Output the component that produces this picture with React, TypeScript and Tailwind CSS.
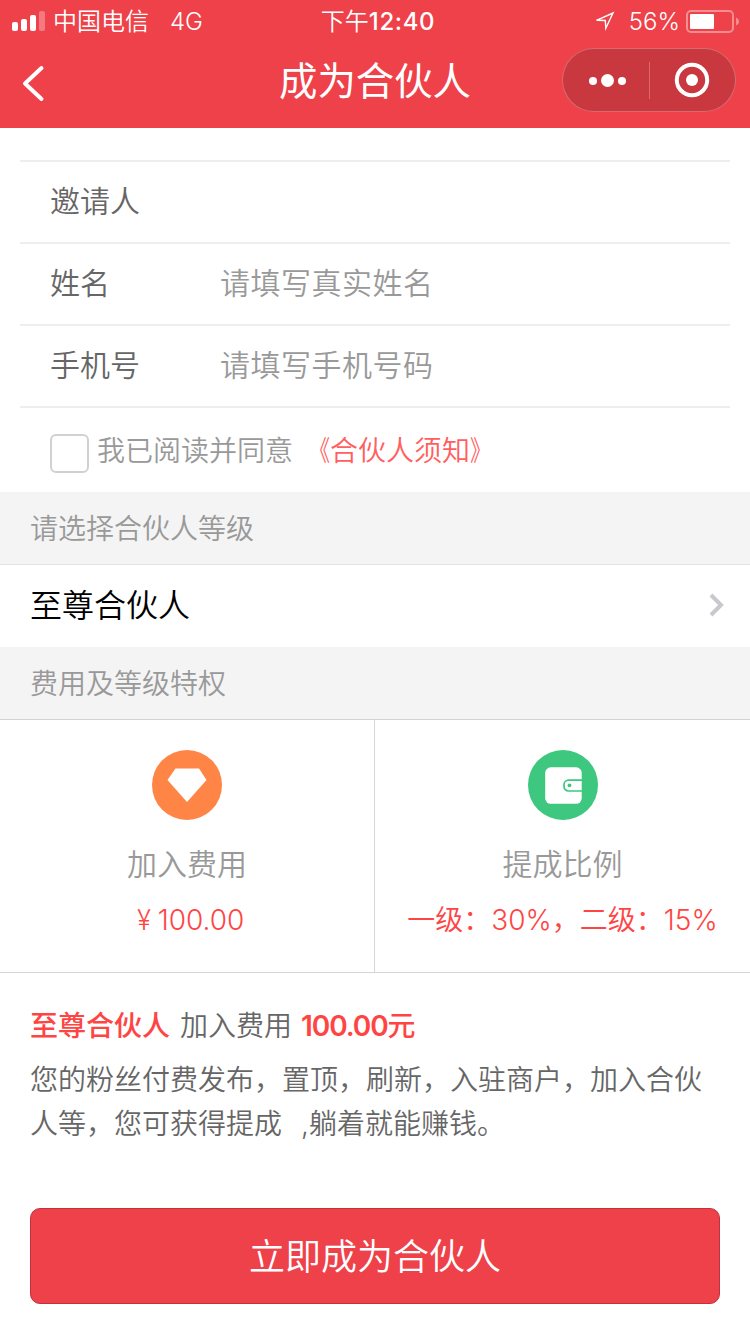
import type { ReactNode } from "react";

function StatusBar() {
  return (
    <div className="grid h-10 grid-cols-[1fr_auto_1fr] items-center text-2xl leading-10">
      <div className="flex items-center pl-3">
        <svg className="mr-2 h-5 w-[33px]" viewBox="0 0 33 20" fill="white">
          <rect x="0" y="11" width="6" height="9" rx="2" />
          <rect x="9" y="8" width="6" height="12" rx="2" />
          <rect x="18" y="4" width="6" height="16" rx="2" />
          <rect x="27" y="0" width="6" height="20" rx="2" opacity="0.3" />
        </svg>
        <span className="pt-0.5">中国电信</span>
        <span className="ml-[21px] pt-0.5">4G</span>
      </div>
      <span className="pl-1.5 pt-0.5">
        下午<span className="font-medium tracking-[0.6px]">12:40</span>
      </span>
      <div className="flex items-center justify-end pr-[11px]">
        <svg className="mr-3.5 h-5 w-5" viewBox="0 0 20 20" fill="none" stroke="white" strokeWidth="1.4">
          <path d="M1.5 9.3 18 2 10.8 17.2 10.3 9.5Z" />
        </svg>
        <span className="pt-0.5">56%</span>
        <svg className="ml-1.5 h-6 w-[53px]" viewBox="0 0 53 24">
          <rect x="1" y="2" width="46" height="21" rx="4" fill="none" stroke="white" strokeOpacity="0.4" strokeWidth="2" />
          <rect x="4" y="5" width="24" height="15" rx="1" fill="white" />
          <path d="M50 8.5c2 1 3 2 3 4s-1 3-3 4Z" fill="white" opacity="0.4" />
        </svg>
      </div>
    </div>
  );
}

function NavBar() {
  return (
    <div className="grid h-[88px] grid-cols-[1fr_auto_1fr] items-start">
      <svg className="ml-[22px] mt-[25px] h-[37px] w-6" viewBox="0 0 24 37" fill="none" stroke="white" strokeWidth="4" strokeLinecap="round" strokeLinejoin="round">
        <path d="M19.5 3 3 18.5 19.5 34" />
      </svg>
      <h1 className="mt-[9px] text-[38.4px] font-normal leading-[64px]">成为合伙人</h1>
      <div className="mr-3.5 mt-2 flex h-16 w-[174px] items-center justify-self-end rounded-full border border-white/25 bg-[#c9383f]">
        <svg className="h-9 w-[86px]" viewBox="0 0 86 36" fill="white">
          <circle cx="30" cy="19" r="4" />
          <circle cx="44.5" cy="18.5" r="6.5" />
          <circle cx="59" cy="19" r="4" />
        </svg>
        <div className="h-[37px] w-px bg-white/25" />
        <svg className="h-9 w-[85px]" viewBox="0 0 85 36">
          <circle cx="42" cy="18" r="15.2" fill="none" stroke="white" strokeWidth="4" />
          <circle cx="42" cy="18" r="6" fill="white" />
        </svg>
      </div>
    </div>
  );
}

function Field({ label, placeholder }: { label: string; placeholder?: string }) {
  return (
    <div className="flex h-[82px] items-center border-t-2 border-[#eeeeee] pb-0.5 pl-[30px] text-[30px] leading-none">
      <span className="w-[170px] text-[#666]">{label}</span>
      <span className="tracking-[0.5px] text-[#999]">{placeholder}</span>
    </div>
  );
}

function SectionTitle({ children, line }: { children: ReactNode; line: string }) {
  return (
    <h2 className={`h-[73px] border-b bg-[#f4f4f4] pl-[30px] text-[28px] font-[350] leading-[74px] text-[#999] ${line}`}>
      {children}
    </h2>
  );
}

function Benefit({ icon, title, value }: { icon: ReactNode; title: string; value: ReactNode }) {
  return (
    <div className="flex flex-col items-center pt-[30px]">
      {icon}
      <div className="mt-[23px] text-[30px] leading-[42px] text-[#999]">{title}</div>
      <div className="mt-[14px] whitespace-nowrap text-[28px] leading-[42px] text-[#ff4544]">{value}</div>
    </div>
  );
}

function DiamondIcon() {
  return (
    <svg className="h-[70px] w-[70px]" viewBox="0 0 70 70">
      <circle cx="35" cy="35" r="35" fill="#ff8547" />
      <path d="M23.5 18.5H47L54.5 30 35 52 15.5 30Z" fill="white" />
    </svg>
  );
}

function WalletIcon() {
  return (
    <svg className="h-[70px] w-[70px]" viewBox="0 0 70 70">
      <circle cx="35" cy="35" r="35" fill="#3dc77f" />
      <rect x="17.2" y="17.3" width="36.5" height="36.5" rx="5.5" fill="white" />
      <path d="M54 30.2H40.5a4.5 4.5 0 0 0-4.5 4.5V36.500a4.500 4.500 0 0 0 4.500 4.500H54" fill="none" stroke="#3dc77f" strokeWidth="1.700" />
      <circle cx="41.500" cy="35.300" r="1.900" fill="#3dc77f" />
    </svg>
  );
}

export default function App() {
  return (
    <div lang="zh-CN" className="min-h-[1334px] w-[750px] bg-white font-['Inter','Noto_Sans_CJK_SC',sans-serif] font-[350]">
      <header className="h-32 bg-[#ee4149] text-white">
        <StatusBar />
        <NavBar />
      </header>

      <section className="mx-5 mt-8">
        <Field label="邀请人" />
        <Field label="姓名" placeholder="请填写真实姓名" />
        <Field label="手机号" placeholder="请填写手机号码" />
        <div className="flex h-[86px] items-start border-t-2 border-[#eeeeee] pl-[30px] text-[28px] leading-[86px]">
          <span className="mt-[26px] h-[39px] w-[39px] rounded-md border-2 border-[#d1d1d1]" />
          <span className="ml-2 text-[#999]">我已阅读并同意</span>
          <span className="ml-[9px] flex text-[#ff5f5f]">
            <span className="origin-right scale-x-75">《</span>合伙人须知<span className="origin-left scale-x-75">》</span>
          </span>
        </div>
      </section>

      <SectionTitle line="border-[#e2e2e2]">请选择合伙人等级</SectionTitle>
      <div className="flex h-[82px] items-center justify-between pb-0.5 pl-[30px] pr-[25px] text-[32px] leading-none text-black">
        <span className="pt-0.5">至尊合伙人</span>
        <svg className="h-6 w-4" viewBox="0 0 16 24" fill="none" stroke="#c8c8cd" strokeWidth="4">
          <path d="m2 2 10 10L2 22" />
        </svg>
      </div>
      <SectionTitle line="border-[#d2d2d2]">费用及等级特权</SectionTitle>

      <section className="grid h-[253px] grid-cols-[374px_1px_375px] border-b border-[#d5d5d5]">
        <Benefit
          icon={<DiamondIcon />}
          title="加入费用"
          value={
            <>
              <span className="inline-block scale-x-75">￥</span>100.00
            </>
          }
        />
        <div className="bg-[#d5d5d5]" />
        <Benefit icon={<WalletIcon />} title="提成比例" value="一级：30%，二级：15%" />
      </section>

      <section className="px-[30px] pt-[31px] text-[28px] leading-[44px] text-[#666]">
        <p>
          <strong className="font-medium text-[#ff4544]">至尊合伙人</strong>
          <span className="ml-[10px] mr-[9px]">加入费用</span>
          <strong className="font-medium text-[#ff4544]">
            <span className="font-semibold tracking-[-1.1px]">100.00</span>元
          </strong>
        </p>
        <p className="mt-[10px] whitespace-nowrap">
          您的粉丝付费发布，置顶，刷新，入驻商户，加入合伙
          <br />
          人等，您可获得提成<span className="ml-[19px]">,躺着就能赚钱。</span>
        </p>
      </section>

      <button className="mx-[30px] mt-[62px] block h-24 w-[690px] rounded-[10px] border border-[#be343a] bg-[#ee4149] pt-0.5 text-[36px] text-white">
        立即成为合伙人
      </button>
    </div>
  );
}
